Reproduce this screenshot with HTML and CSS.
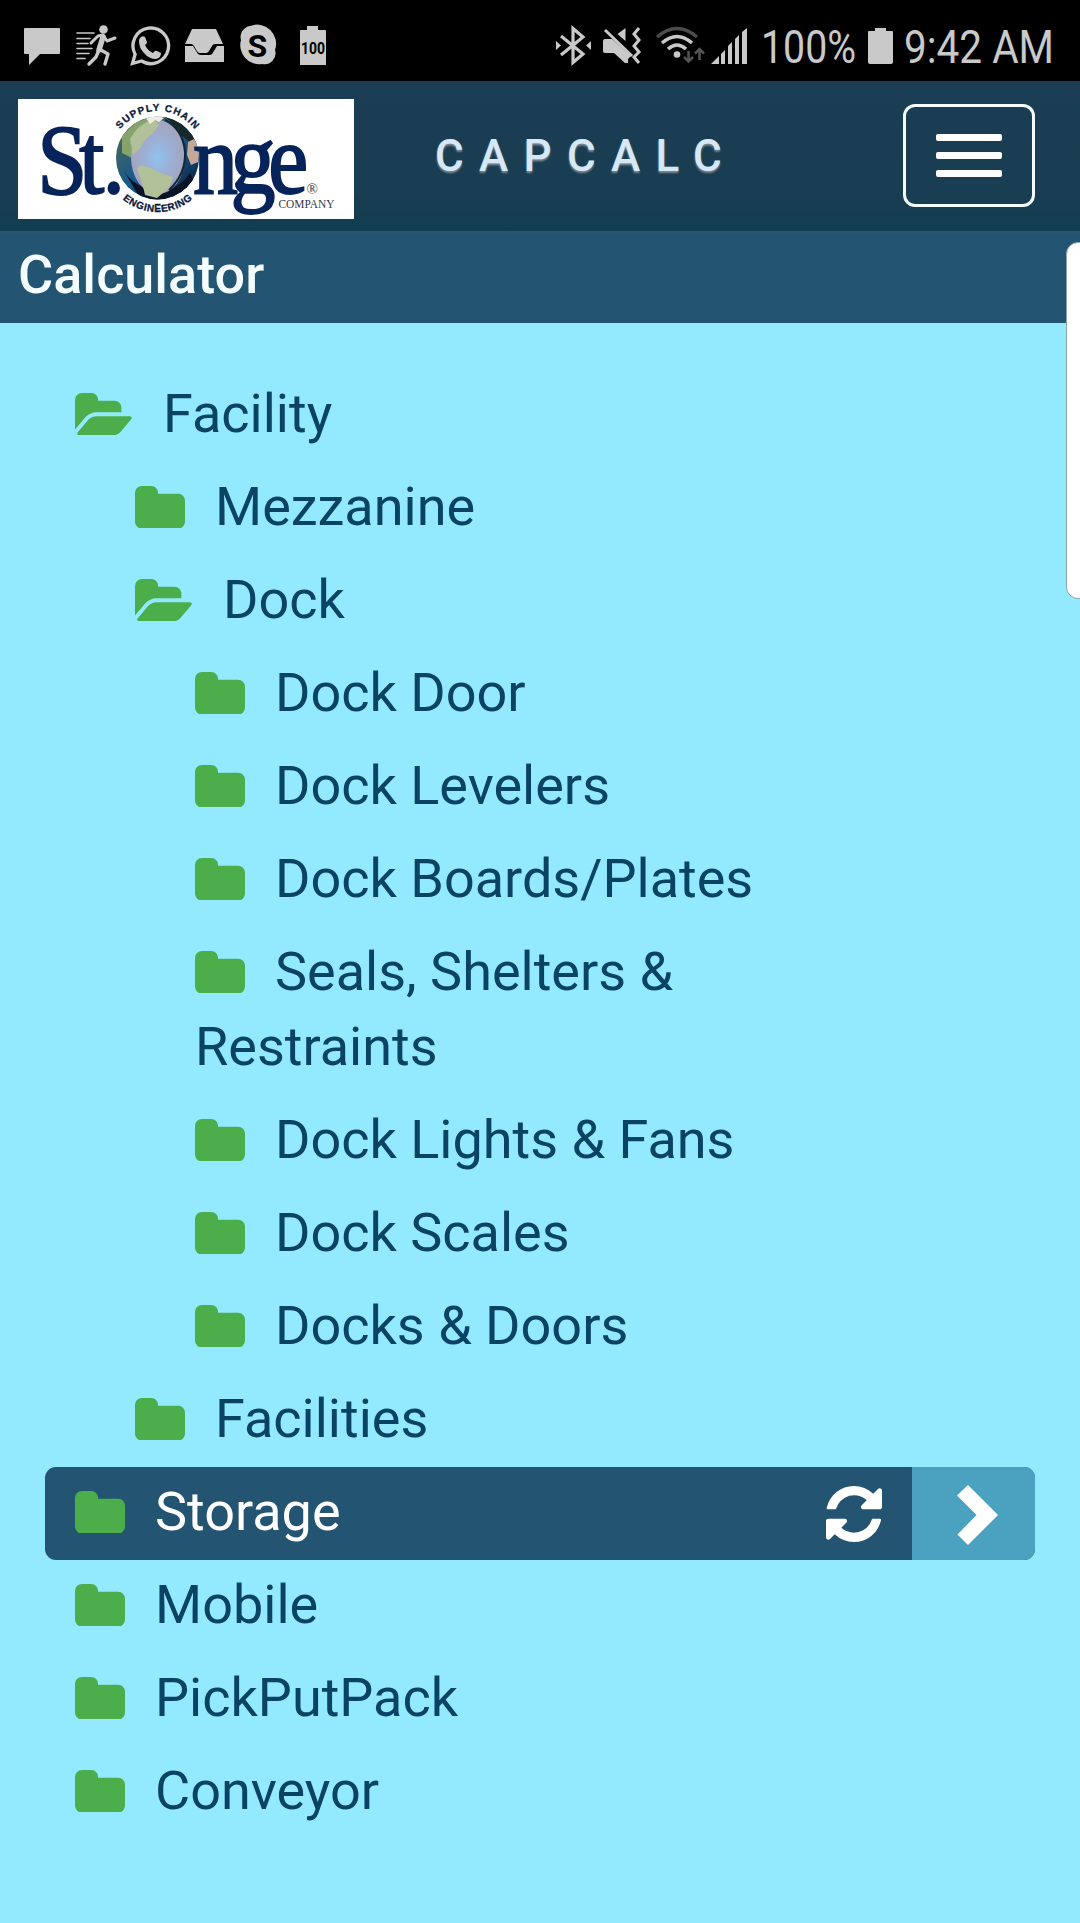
FILE: index.html
```html
<!DOCTYPE html>
<html lang="en">
<head>
<meta charset="utf-8">
<title>CapCalc</title>
<link rel="stylesheet" href="styles.css">
</head>
<body>
<svg class="defs" aria-hidden="true">
  <symbol id="folder" viewBox="64 128 1664 1408"><path d="M1728 608v704q0 92-66 158t-158 66h-1216q-92 0-158-66t-66-158v-960q0-92 66-158t158-66h320q92 0 158 66t66 158v32h672q92 0 158 66t66 158z"/></symbol>
  <symbol id="folder-open" viewBox="-64 128 1920 1408"><path d="M1815 952q0 31-31 66l-336 396q-43 51-120.5 86.5t-143.5 35.5h-1088q-34 0-60.5-13t-26.5-43q0-31 31-66l336-396q43-51 120.5-86.5t143.5-35.5h1088q34 0 60.5 13t26.5 43zm-343-344v160h-832q-94 0-197 47.5t-164 119.5l-337 396-5 6q0-4-.5-12.5t-.5-12.5v-960q0-92 66-158t158-66h320q92 0 158 66t66 158v32h544q92 0 158 66t66 158z"/></symbol>
</svg>

<div class="status">
  <svg class="status-left" width="360" height="81" viewBox="0 0 360 81">
    <path d="M25 28h34q1 0 1 1v24q0 1-1 1H40L29 65V54h-4q-1 0-1-1V29q0-1 1-1z"/>
    <g fill="none" stroke="#c9c9c9" stroke-linecap="round" stroke-linejoin="round">
      <path stroke-width="1.6" d="M77 33h17M77 38.500h13M77 43.500h11M77 48.500h15M77 53.500h12M77 58.500h8"/>
      <path stroke-width="3" d="M91 43l7-7 5-1 4 6 8-3"/>
      <path stroke-width="5.500" d="M103 37l-4 13"/>
      <path stroke-width="3.400" d="M99 50l-3 7-7 7M99 49l9 5-3 10"/>
    </g>
    <circle cx="103.500" cy="29.500" r="4.300"/>
    <path fill="none" stroke="#c9c9c9" stroke-width="3.300" d="M132.500 63.500l2.600-9.300A17.800 17.800 0 1 1 141.500 61z"/>
    <path d="M140 38q2-3 5-1l2 5q0 2-2 3 3 6 8 8 2-3 4-2l4 2q0 5-5 6-7 0-12-6-5-5-5-12 0-2 1-3z"/>
    <path d="M192 29h24l7 15h-8q-2 0-3 2l-3 5q-1 2-3 2h-6q-2 0-3-2l-3-5q-1-2-3-2h-6z"/>
    <path d="M185 46h8l5 8q1 1 3 1h8q2 0 3-1l5-8h7v16h-39z"/>
    <path d="M250 26A19 19 0 0 1 275 50 11 11 0 0 1 262 64 19 19 0 0 1 241 40 11 11 0 0 1 250 26z"/>
    <text class="skype" x="247.500" y="56.500">S</text>
    <path d="M307 26h11v4h7q1 0 1 1v34h-26V31q0-1 1-1h6z"/>
    <text class="charge" x="301" y="53.500" textLength="24" lengthAdjust="spacingAndGlyphs">100</text>
  </svg>
  <svg class="status-right" width="540" height="81" viewBox="540 0 540 81">
    <path fill="none" stroke="#c9c9c9" stroke-width="3.200" d="M561 36l22 18-10 8.500V28.500L583 37 561 55"/>
    <path d="M556 41l5 4.500-5 4.500zM591 41l-5 4.500 5 4.500z"/>
    <path d="M603 41q0-2 2-2h7l19 17-3 3v4h-3l-11-10h-9q-2 0-2-2zM625.500 28v13l-8-7z"/>
    <path fill="none" stroke="#c9c9c9" stroke-width="3" d="M605 30l27 26M639 28l-5 6 5 6-5 6 5 6-5 5 5 6"/>
    <g fill="none" stroke="#c9c9c9" stroke-width="3.400">
      <path stroke="#4c4c4c" d="M657 37q20-17 40 0"/>
      <path d="M662 43q15-13 30 0M668 49q9-8 18 0"/>
    </g>
    <circle cx="677" cy="54.500" r="3.300"/>
    <path fill="none" stroke="#555" stroke-width="2.500" d="M688.500 51v10M684 57l4.500 4.500 4.500-4.500M699.500 60V49M695 53.500l4.500-4.500 4.500 4.500"/>
    <path d="M711 64l8-8v8zM721 54l4-4v14h-4zM728 46l4-4v22h-4zM735 39l4-4v29h-4zM742 32l5-4v36h-5z"/>
    <text class="clock" x="761" y="63" textLength="95" lengthAdjust="spacingAndGlyphs">100%</text>
    <path d="M875 28h11v3h6q1 0 1 1v30q0 2-2 2h-21q-2 0-2-2V32q0-1 1-1h6z"/>
    <text class="clock" x="904" y="63" textLength="150" lengthAdjust="spacingAndGlyphs">9:42 AM</text>
  </svg>
</div>

<header class="nav">
  <svg class="logo" width="336" height="120" viewBox="0 0 336 120">
    <defs>
      <radialGradient id="core"><stop offset="0" stop-color="#8fc3ee"/><stop offset=".5" stop-color="#9cafd4"/><stop offset="1" stop-color="#a3a5bd"/></radialGradient>
      <linearGradient id="sea" x1="0" x2="1" y1="0" y2="1"><stop offset="0" stop-color="#536d4a"/><stop offset=".5" stop-color="#17588c"/><stop offset="1" stop-color="#0b1c38"/></linearGradient>
      <clipPath id="disc"><circle cx="139.500" cy="59" r="41.500"/></clipPath>
      <path id="arc-top" d="M92.500 59a47 47 0 0 1 94 0"/>
      <path id="arc-bottom" d="M85.500 59a54 54 0 0 0 108 0"/>
    </defs>
    <text class="wordmark" transform="scale(.9 1)" x="21.500 68 94" y="94">St.</text>
    <g clip-path="url(#disc)">
      <circle cx="139.500" cy="59" r="42" fill="url(#sea)"/>
      <path fill="#85a36a" d="M104 37l14-14 19-6 8 8-14 11-9 14-6 10-12-6z"/>
      <path fill="#17282b" d="M144 16l18 6 20 22-6 2-12-9-12-15z"/>
      <path fill="#c6a89b" d="M170 43l6-3 6 8-2 15-7 3-4-10z"/>
      <path fill="#081426" d="M106 72q10 16 32 20 22 0 34-18l4 8-22 24h-28z"/>
      <ellipse cx="140" cy="58" rx="27" ry="37" fill="url(#core)"/>
      <path fill="#b2c19a" d="M112 40q8-15 24-20l5 6-6 8-7 6-5 8-8 8zM119 70l3-4 9 2 9 5 15 5-4 11-12 10-12-3-3-13z"/>
      <path fill="#f0eee4" d="M128 19l10-3 8 3-5 4-4-2-5 4z"/>
      <path fill="none" stroke="#172535" stroke-width="2" d="M147 21q18 9 20 32 1 22-16 38"/>
    </g>
    <text class="wordmark" transform="scale(.9 1)" x="194.500 236 278" y="94">nge</text>
    <text class="ring"><textPath href="#arc-top" startOffset="50%" text-anchor="middle" textLength="86">SUPPLY CHAIN</textPath></text>
    <text class="ring"><textPath href="#arc-bottom" startOffset="50%" text-anchor="middle" textLength="76">ENGINEERING</textPath></text>
    <text class="reg" x="288.500" y="95">®</text>
    <text class="company" x="260.500" y="109" textLength="56" lengthAdjust="spacingAndGlyphs">COMPANY</text>
  </svg>
  <div class="brand">CAPCALC</div>
  <div class="burger"><span></span><span></span><span></span></div>
</header>

<h1 class="title">Calculator</h1>

<main class="tree">
  <div class="row"><svg class="open"><use href="#folder-open"/></svg>Facility</div>
  <div class="row l2"><svg class="shut"><use href="#folder"/></svg>Mezzanine</div>
  <div class="row l2"><svg class="open"><use href="#folder-open"/></svg>Dock</div>
  <div class="row l3"><svg class="shut"><use href="#folder"/></svg>Dock Door</div>
  <div class="row l3"><svg class="shut"><use href="#folder"/></svg>Dock Levelers</div>
  <div class="row l3"><svg class="shut"><use href="#folder"/></svg>Dock Boards/Plates</div>
  <div class="row l3"><svg class="shut"><use href="#folder"/></svg>Seals, Shelters &amp; Restraints</div>
  <div class="row l3"><svg class="shut"><use href="#folder"/></svg>Dock Lights &amp; Fans</div>
  <div class="row l3"><svg class="shut"><use href="#folder"/></svg>Dock Scales</div>
  <div class="row l3"><svg class="shut"><use href="#folder"/></svg>Docks &amp; Doors</div>
  <div class="row l2"><svg class="shut"><use href="#folder"/></svg>Facilities</div>
  <div class="selected">
    <div class="row"><svg class="shut"><use href="#folder"/></svg>Storage</div>
    <svg class="refresh" viewBox="128 128 1536 1536"><path d="M1639 1056q0 5-1 7-64 268-268 434.500t-478 166.500q-146 0-282.500-55t-243.500-157l-129 129q-19 19-45 19t-45-19-19-45v-448q0-26 19-45t45-19h448q26 0 45 19t19 45-19 45l-137 137q71 66 161 102t187 36q134 0 250-65t186-179q11-17 53-117 8-23 30-23h192q13 0 22.500 9.500t9.500 22.500zm25-800v448q0 26-19 45t-45 19h-448q-26 0-45-19t-19-45 19-45l138-138q-148-137-349-137-134 0-250 65t-186 179q-11 17-53 117-8 23-30 23h-199q-13 0-22.500-9.500t-9.500-22.500v-7q65-268 270-434.500t480-166.500q146 0 284 55.500t245 156.500l130-129q19-19 45-19t45 19 19 45z"/></svg>
    <div class="go"><svg width="42" height="60" viewBox="0 0 42 60"><path d="M0 10.500L11 0l30 30-30 30L0.500 49.500 19.500 30z"/></svg></div>
  </div>
  <div class="row"><svg class="shut"><use href="#folder"/></svg>Mobile</div>
  <div class="row"><svg class="shut"><use href="#folder"/></svg>PickPutPack</div>
  <div class="row"><svg class="shut"><use href="#folder"/></svg>Conveyor</div>
</main>
<div class="edge"></div>
</body>
</html>
```
FILE: styles.css
```css
* { box-sizing: border-box; }
body {
  margin: 0;
  width: 1080px;
  height: 1923px;
  overflow: hidden;
  position: relative;
  background: #93eaff;
  color: #0b4365;
  font-family: Roboto, "Liberation Sans", sans-serif;
}
svg { display: block; }
.defs { position: absolute; width: 0; height: 0; }

.status { display: flex; justify-content: space-between; height: 81px; background: #000; fill: #c9c9c9; }
.clock { font-size: 46px; }
.skype { font-size: 32px; font-weight: 700; fill: #000; }
.charge { font-size: 17px; font-weight: 700; fill: #000; }

.nav {
  display: flex;
  align-items: center;
  height: 150px;
  padding: 0 45px 0 18px;
  background: linear-gradient(#1c3d54, #193d52 75%, #123d50);
}
.logo { background: #fff; margin-top: 6px; }
.wordmark { font: 100px "Liberation Serif", serif; fill: #06235a; stroke: #06235a; stroke-width: 2px; }
.ring { font: 700 10px "Liberation Sans", sans-serif; fill: #101a3c; stroke: #101a3c; stroke-width: .3px; }
.reg { font: 15px "Liberation Serif", serif; fill: #333a4a; }
.company { font: 12px "Liberation Serif", serif; fill: #333a4a; }
.brand {
  margin: 0 auto 0 81px;
  font-size: 44px;
  font-weight: 500;
  letter-spacing: 15.3px;
  color: #d6e8f5;
  text-shadow: 0 2px 2px #7d8b93;
}
.burger {
  display: flex;
  flex-direction: column;
  align-items: center;
  justify-content: center;
  gap: 11px;
  width: 132px;
  height: 103px;
  margin-bottom: 1px;
  border: 3px solid #f4fbff;
  border-radius: 12px;
}
.burger span { width: 66px; height: 7px; border-radius: 2px; background: #fff; }

.title {
  margin: 0;
  height: 92px;
  padding-left: 18px;
  background: #235472;
  border-top: 3px solid #285768;
  color: #f4fdff;
  font-size: 54px;
  line-height: 82px;
  font-weight: 500;
}

.tree { padding: 46px 45px 0; }
.row { padding: 7px 200px 11px 30px; font-size: 54px; line-height: 75px; }
.row.l2 { padding-left: 90px; }
.row.l3 { padding-left: 150px; }
.row svg { display: inline-block; height: 42.5px; margin-right: 30px; vertical-align: -3px; fill: #4bae4b; }
.row .shut { width: 50px; }
.row .open { width: 58px; }

.selected { display: flex; align-items: center; background: #235472; color: #fff; border-radius: 11px; overflow: hidden; }
.selected .row { flex: 1; padding-right: 0; }
.refresh { width: 56px; height: 56px; margin-right: 30px; fill: #fff; }
.go { display: flex; align-items: center; align-self: stretch; width: 123px; padding: 3px 0 0 45px; background: #4aa1c0; fill: #fff; }

.edge {
  position: absolute;
  top: 242px;
  right: -14px;
  width: 28px;
  height: 357px;
  background: #fff;
  border: 1px solid #8ba3b0;
  border-radius: 12px;
}
```
